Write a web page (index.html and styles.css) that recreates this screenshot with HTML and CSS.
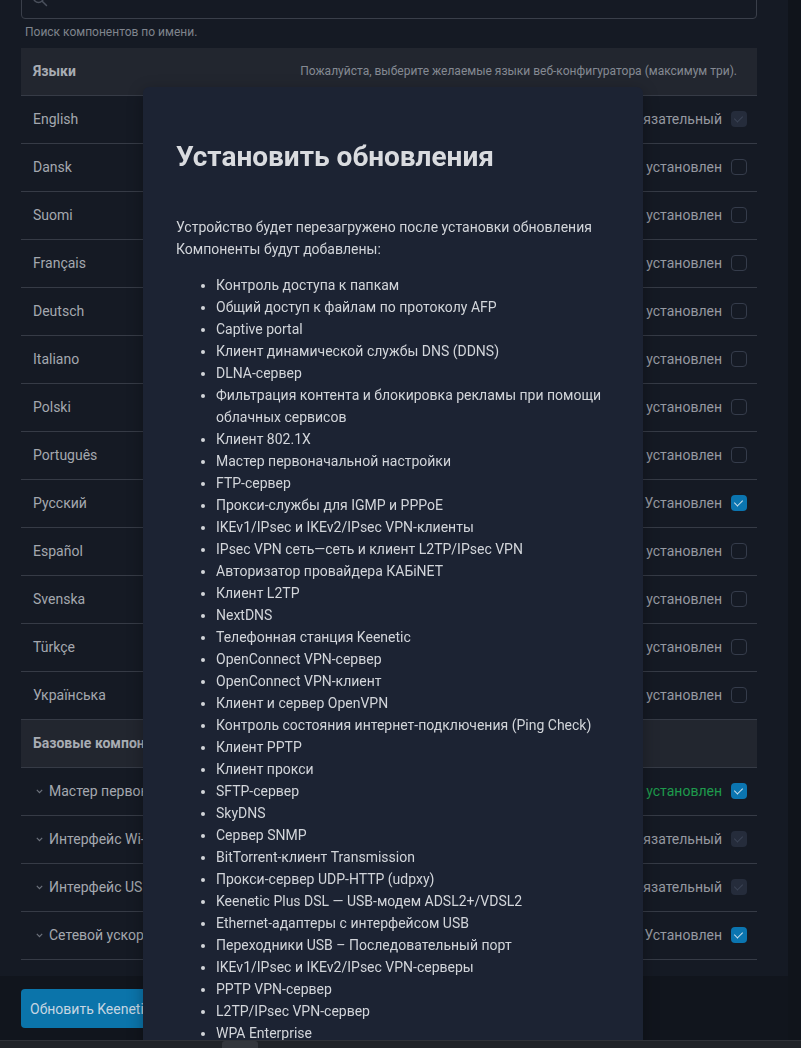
FILE: index.html
```html
<!DOCTYPE html>
<html lang="ru">
<head>
    <meta charset="UTF-8">
    <meta name="viewport" content="width=device-width, initial-scale=1.0">
    <title>Компоненты</title>
    <link rel="stylesheet" href="styles.css">
</head>
<body>

    <div class="layout">
        <main class="main">
            <div class="content">

                <!-- Search -->
                <div class="search">
                    <svg class="search-icon" width="16" height="16" viewBox="0 0 16 16">
                        <circle cx="6.5" cy="6.5" r="5" fill="none" stroke="#4a505c" stroke-width="1.5"/>
                        <path d="M10.2 10.2 L14.5 14.5" stroke="#4a505c" stroke-width="1.5" stroke-linecap="round"/>
                    </svg>
                </div>
                <p class="hint">Поиск компонентов по имени.</p>

                <!-- Languages -->
                <div class="group-head">
                    <span class="group-title">Языки</span>
                    <span class="group-note">Пожалуйста, выберите желаемые языки веб-конфигуратора (максимум три).</span>
                </div>
                <div class="row"><span class="name">English</span><span class="status">Обязательный</span><span class="check locked"></span></div>
                <div class="row"><span class="name">Dansk</span><span class="status">Не установлен</span><span class="check"></span></div>
                <div class="row"><span class="name">Suomi</span><span class="status">Не установлен</span><span class="check"></span></div>
                <div class="row"><span class="name">Français</span><span class="status">Не установлен</span><span class="check"></span></div>
                <div class="row"><span class="name">Deutsch</span><span class="status">Не установлен</span><span class="check"></span></div>
                <div class="row"><span class="name">Italiano</span><span class="status">Не установлен</span><span class="check"></span></div>
                <div class="row"><span class="name">Polski</span><span class="status">Не установлен</span><span class="check"></span></div>
                <div class="row"><span class="name">Português</span><span class="status">Не установлен</span><span class="check"></span></div>
                <div class="row"><span class="name">Русский</span><span class="status">Установлен</span><span class="check on"></span></div>
                <div class="row"><span class="name">Español</span><span class="status">Не установлен</span><span class="check"></span></div>
                <div class="row"><span class="name">Svenska</span><span class="status">Не установлен</span><span class="check"></span></div>
                <div class="row"><span class="name">Türkçe</span><span class="status">Не установлен</span><span class="check"></span></div>
                <div class="row"><span class="name">Українська</span><span class="status">Не установлен</span><span class="check"></span></div>

                <!-- Base components -->
                <div class="group-head">
                    <span class="group-title">Базовые компоненты</span>
                </div>
                <div class="row">
                    <svg class="chev" width="7" height="5" viewBox="0 0 7 5"><path d="M0.8 0.8 L3.5 3.6 L6.2 0.8" fill="none" stroke="#6d727c" stroke-width="1.2"/></svg>
                    <span class="name">Мастер первоначальной настройки</span><span class="status green">Будет установлен</span><span class="check on"></span>
                </div>
                <div class="row">
                    <svg class="chev" width="7" height="5" viewBox="0 0 7 5"><path d="M0.8 0.8 L3.5 3.6 L6.2 0.8" fill="none" stroke="#6d727c" stroke-width="1.2"/></svg>
                    <span class="name">Интерфейс Wi-Fi</span><span class="status">Обязательный</span><span class="check locked"></span>
                </div>
                <div class="row">
                    <svg class="chev" width="7" height="5" viewBox="0 0 7 5"><path d="M0.8 0.8 L3.5 3.6 L6.2 0.8" fill="none" stroke="#6d727c" stroke-width="1.2"/></svg>
                    <span class="name">Интерфейс USB</span><span class="status">Обязательный</span><span class="check locked"></span>
                </div>
                <div class="row">
                    <svg class="chev" width="7" height="5" viewBox="0 0 7 5"><path d="M0.8 0.8 L3.5 3.6 L6.2 0.8" fill="none" stroke="#6d727c" stroke-width="1.2"/></svg>
                    <span class="name">Сетевой ускоритель</span><span class="status">Установлен</span><span class="check on"></span>
                </div>
            </div>

            <div class="footer">
                <button class="btn-primary">Обновить Keenetic OS</button>
            </div>
        </main>
        <div class="scrollbar"></div>
    </div>

    <!-- Update dialog -->
    <div class="modal">
        <h2>Установить обновления</h2>
        <p>Устройство будет перезагружено после установки обновления<br>Компоненты будут добавлены:</p>
        <ul>
            <li>Контроль доступа к папкам</li>
            <li>Общий доступ к файлам по протоколу AFP</li>
            <li>Captive portal</li>
            <li>Клиент динамической службы DNS (DDNS)</li>
            <li>DLNA-сервер</li>
            <li>Фильтрация контента и блокировка рекламы при помощи облачных сервисов</li>
            <li>Клиент 802.1X</li>
            <li>Мастер первоначальной настройки</li>
            <li>FTP-сервер</li>
            <li>Прокси-службы для IGMP и PPPoE</li>
            <li>IKEv1/IPsec и IKEv2/IPsec VPN-клиенты</li>
            <li>IPsec VPN сеть—сеть и клиент L2TP/IPsec VPN</li>
            <li>Авторизатор провайдера КАБiNET</li>
            <li>Клиент L2TP</li>
            <li>NextDNS</li>
            <li>Телефонная станция Keenetic</li>
            <li>OpenConnect VPN-сервер</li>
            <li>OpenConnect VPN-клиент</li>
            <li>Клиент и сервер OpenVPN</li>
            <li>Контроль состояния интернет-подключения (Ping Check)</li>
            <li>Клиент PPTP</li>
            <li>Клиент прокси</li>
            <li>SFTP-сервер</li>
            <li>SkyDNS</li>
            <li>Сервер SNMP</li>
            <li>BitTorrent-клиент Transmission</li>
            <li>Прокси-сервер UDP-HTTP (udpxy)</li>
            <li>Keenetic Plus DSL — USB-модем ADSL2+/VDSL2</li>
            <li>Ethernet-адаптеры с интерфейсом USB</li>
            <li>Переходники USB – Последовательный порт</li>
            <li>IKEv1/IPsec и IKEv2/IPsec VPN-серверы</li>
            <li>PPTP VPN-сервер</li>
            <li>L2TP/IPsec VPN-сервер</li>
            <li>WPA Enterprise</li>
        </ul>
    </div>

    <!-- Horizontal scrollbar strip -->
    <div class="hscroll"><div class="hscroll-thumb"></div></div>

</body>
</html>
```

FILE: styles.css
```css
/* Common Styles */
body {
    margin: 0;
    height: 1048px;
    overflow: hidden;
    background-color: #151a24;
    color: #a4a8af;
    font-family: Roboto, "Liberation Sans", sans-serif;
    font-size: 14px;
}

.layout {
    display: flex;
    height: 1048px;
}

.main {
    flex: 1;
    display: flex;
    flex-direction: column;
}

.scrollbar {
    width: 13px;
    background-color: #10141b;
}

.content {
    padding: 0 31px 0 21px;
}

/* Search */
.search {
    height: 40px;
    margin-top: -21px;
    box-sizing: border-box;
    border: 1px solid #3a3f4a;
    border-radius: 4px;
    display: flex;
    align-items: center;
    padding-left: 10px;
}

.hint {
    margin: 0 0 9px;
    padding: 6px 0 0 4px;
    font-size: 12px;
    line-height: 14px;
    color: #7f848d;
}

/* Groups and rows */
.group-head {
    height: 48px;
    display: flex;
    align-items: center;
    justify-content: space-between;
    padding: 0 20px 1px 12px;
    background-color: #22262f;
    border-bottom: 1px solid #363b46;
    box-sizing: border-box;
}

.group-title {
    font-weight: bold;
    font-size: 14px;
    color: #a8acb3;
}

.group-note {
    font-size: 12px;
    color: #858a93;
}

.row {
    height: 48px;
    display: flex;
    align-items: center;
    padding: 0 10px 1px 12px;
    border-bottom: 1px solid #363b46;
    box-sizing: border-box;
}

.name {
    flex: 1;
    color: #a4a8af;
}

.status {
    margin-right: 9px;
    color: #9599a1;
}

.status.green {
    color: #1e9a4c;
}

.chev {
    margin: 1px 6px 0 3px;
    flex-shrink: 0;
}

/* Checkboxes */
.check {
    width: 16px;
    height: 16px;
    box-sizing: border-box;
    border: 1.5px solid #353c4b;
    border-radius: 4px;
    position: relative;
}

.check.on,
.check.locked {
    border: none;
}

.check.on {
    background-color: #0b75b0;
}

.check.locked {
    background-color: #252c3b;
}

.check.on::after,
.check.locked::after {
    content: "";
    position: absolute;
    left: 5px;
    top: 3px;
    width: 4px;
    height: 7px;
    border-right: 1.5px solid #d0e2ee;
    border-bottom: 1.5px solid #d0e2ee;
    transform: rotate(45deg);
}

.check.locked::after {
    border-color: #3c4455;
}

/* Footer */
.footer {
    margin-top: 16px;
    height: 65px;
    background-color: #11151d;
    padding: 13px 0 0 21px;
    box-sizing: border-box;
}

.btn-primary {
    height: 39px;
    padding: 0 9px;
    border: none;
    border-radius: 4px;
    background-color: #0b74aa;
    color: #c6d6e2;
    font-family: Roboto, "Liberation Sans", sans-serif;
    font-size: 14px;
    cursor: pointer;
}

/* Dialog */
.modal {
    position: fixed;
    left: 143px;
    top: 87px;
    width: 500px;
    height: 1100px;
    box-sizing: border-box;
    padding: 52px 33px 0;
    background-color: #1c2333;
    border-radius: 6px;
    box-shadow: 0 4px 16px rgba(0, 0, 0, 0.3);
    color: #d2d5da;
    overflow: hidden;
}

.modal h2 {
    margin: 0;
    font-size: 28px;
    line-height: 36px;
    font-weight: bold;
    color: #d9dbdf;
}

.modal p {
    margin: 41px 0 14px;
    line-height: 22px;
}

.modal ul {
    margin: 0;
    padding-left: 40px;
    line-height: 22px;
}

/* Bottom strip */
.hscroll {
    position: fixed;
    left: 0;
    right: 0;
    bottom: 0;
    height: 7px;
    background-color: #202328;
    border-top: 1px solid #2f3238;
}

.hscroll-thumb {
    margin-left: 222px;
    width: 36px;
    height: 7px;
    background-color: #33363c;
    border-radius: 3px 3px 0 0;
}
```
